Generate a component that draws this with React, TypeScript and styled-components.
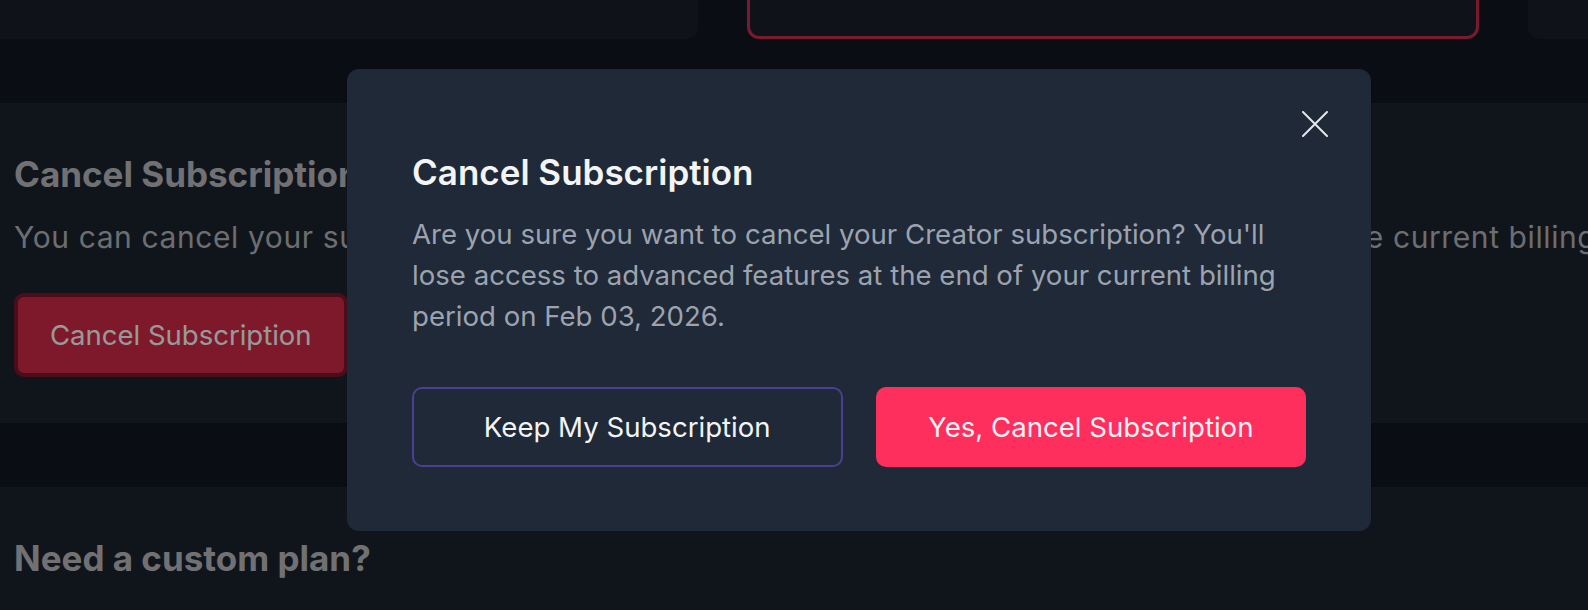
import React from "react";
import styled, { createGlobalStyle } from "styled-components";

const GlobalStyle = createGlobalStyle`
  html, body {
    margin: 0;
    padding: 0;
    background: #111620;
    overflow: hidden;
    font-family: Inter, "Noto Sans", "Liberation Sans", sans-serif;
  }
  * { box-sizing: border-box; }
`;

const Page = styled.div`
  width: 2292px;
  margin-left: -34px;
  margin-top: -61.5px;
  display: flex;
  flex-direction: column;
  gap: 64px;
`;

const PlanRow = styled.div`
  display: grid;
  grid-template-columns: repeat(3, 732px);
  column-gap: 49px;
`;

const PlanCard = styled.div<{ $current?: boolean }>`
  height: 100px;
  border-radius: 12px;
  background: #19202b;
  border: ${(p) => (p.$current ? "3px solid #c82f4b" : "none")};
`;

const Section = styled.section`
  background: #1c232f;
  border-radius: 12px;
  padding: 45px 48px 46px;
`;

const SectionTitle = styled.h2`
  margin: 0 0 15px;
  font-size: 35px;
  line-height: 1.5;
  font-weight: 700;
  color: #bcbdc1;
`;

const SectionText = styled.p`
  margin: 0 0 33px;
  font-size: 30px;
  letter-spacing: 0.6px;
  line-height: 1.5;
  font-weight: 400;
  color: #b4b7bc;
  white-space: nowrap;
`;

const FollowText = styled(SectionText)`
  margin: 24px 0 0;
`;

const DangerButton = styled.button`
  font-family: inherit;
  font-size: 27.5px;
  line-height: 1.5;
  font-weight: 400;
  color: #ffffff;
  background: #d02b49;
  border: 4px solid #7d172a;
  border-radius: 10px;
  padding: 17.5px 32px;
  cursor: pointer;
`;

const Backdrop = styled.div`
  position: fixed;
  inset: 0;
  background: rgba(0, 0, 0, 0.4);
  display: flex;
  align-items: flex-start;
  justify-content: flex-start;
  padding: 69px 0 0 347px;
`;

const Modal = styled.div`
  position: relative;
  width: 1024px;
  background: #1f2937;
  border-radius: 12px;
  padding: 77px 65px 64px;
`;

const CloseButton = styled.button`
  position: absolute;
  top: 42px;
  right: 43px;
  width: 26px;
  height: 26px;
  padding: 0;
  border: none;
  background: transparent;
  display: flex;
  cursor: pointer;
`;

const ModalTitle = styled.h3`
  margin: 0 0 15px;
  font-size: 35px;
  line-height: 1.5;
  font-weight: 600;
  color: #f3f4f6;
`;

const ModalText = styled.p`
  margin: 0 0 49.5px;
  font-size: 27.6px;
  line-height: 1.5;
  color: #9ca3af;
`;

const Actions = styled.div`
  display: grid;
  grid-template-columns: 1fr 1fr;
  column-gap: 33px;
`;

const ActionButton = styled.button<{ $variant: "outline" | "danger" }>`
  height: 80px;
  border-radius: 10px;
  font-family: inherit;
  font-size: 27.6px;
  font-weight: 400;
  cursor: pointer;
  display: flex;
  align-items: center;
  justify-content: center;
  color: ${(p) => (p.$variant === "danger" ? "#fff3f5" : "#f3f4f6")};
  background: ${(p) => (p.$variant === "danger" ? "#ff2f5d" : "transparent")};
  border: 2px solid ${(p) => (p.$variant === "danger" ? "#ff2f5d" : "#4c3f91")};
`;

export default function App() {
  return (
    <>
      <GlobalStyle />
      <Page>
        <PlanRow>
          <PlanCard />
          <PlanCard $current />
          <PlanCard />
        </PlanRow>
        <Section>
          <SectionTitle>Cancel Subscription</SectionTitle>
          <SectionText>
            You can cancel your subscription anytime. You'll continue to have access until the end of the current billing period.
          </SectionText>
          <DangerButton>Cancel Subscription</DangerButton>
        </Section>
        <Section>
          <SectionTitle>Need a custom plan?</SectionTitle>
          <FollowText>
            Contact our team to discuss enterprise options tailored to your needs.
          </FollowText>
        </Section>
      </Page>
      <Backdrop>
        <Modal role="dialog" aria-modal="true">
          <CloseButton aria-label="Close">
            <svg width="26" height="26" viewBox="0 0 26 26" fill="none">
              <path d="M1 1L25 25M25 1L1 25" stroke="#e5e7eb" strokeWidth="2" strokeLinecap="round" />
            </svg>
          </CloseButton>
          <ModalTitle>Cancel Subscription</ModalTitle>
          <ModalText>
            Are you sure you want to cancel your Creator subscription? You'll lose access to advanced features at the end of your current billing period on Feb 03, 2026.
          </ModalText>
          <Actions>
            <ActionButton $variant="outline">Keep My Subscription</ActionButton>
            <ActionButton $variant="danger">Yes, Cancel Subscription</ActionButton>
          </Actions>
        </Modal>
      </Backdrop>
    </>
  );
}
